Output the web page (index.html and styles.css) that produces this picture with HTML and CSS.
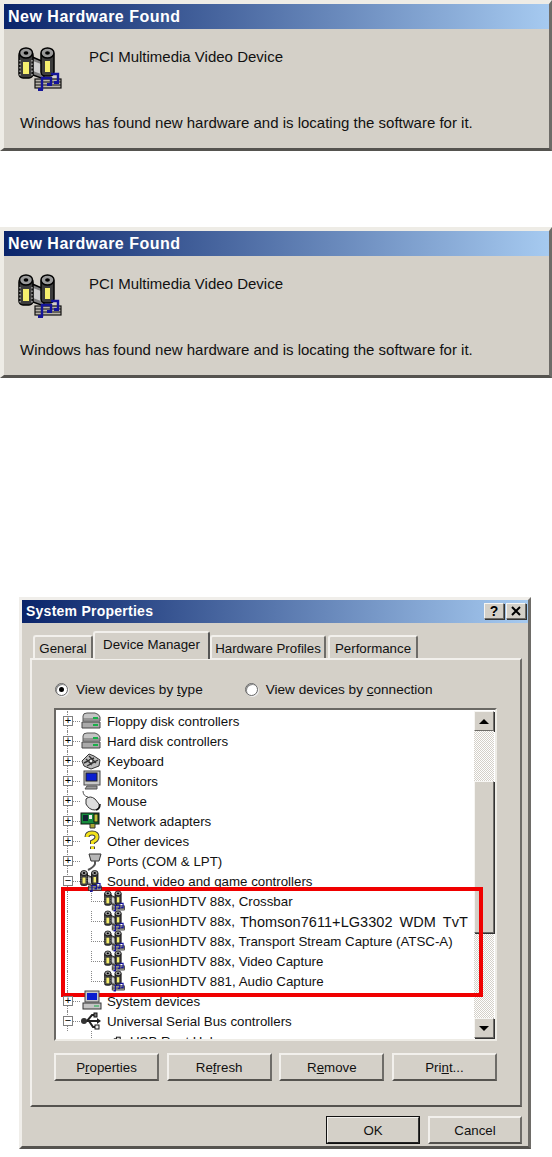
FILE: index.html
```html
<!DOCTYPE html>
<html lang="en">
<head>
  <meta charset="UTF-8" />
  <title>Hardware setup</title>
  <link rel="stylesheet" href="styles.css">
</head>
<body>

  <svg class="sprites" width="0" height="0">
    <symbol id="i-film" viewBox="0 0 44 44">
      <path d="M12 9 L26 15 V32 L12 27Z" fill="#7d7d7d" stroke="#000" stroke-width="1.5"/>
      <path d="M15 14 L23 17 V27 L15 24Z" fill="#cfcfcf"/>
      <rect x="1" y="4" width="14" height="27" rx="4" fill="#3c3c3c" stroke="#000" stroke-width="1.5"/>
      <ellipse cx="8" cy="6" rx="6.5" ry="5" fill="#9a9a9a" stroke="#000" stroke-width="1.5"/>
      <ellipse cx="8" cy="6" rx="2.4" ry="1.8" fill="#000"/>
      <rect x="5" y="15" width="6" height="12" fill="#f6ef6e"/>
      <path d="M2 13V29M14 13V29" stroke="#ddd" stroke-dasharray="1.5 2"/>
      <rect x="23" y="4" width="13" height="25" rx="4" fill="#3c3c3c" stroke="#000" stroke-width="1.5"/>
      <ellipse cx="29.5" cy="6" rx="6.5" ry="5" fill="#9a9a9a" stroke="#000" stroke-width="1.5"/>
      <ellipse cx="29.5" cy="6" rx="2.4" ry="1.8" fill="#000"/>
      <rect x="27" y="14" width="5" height="11" fill="#f6ef6e"/>
      <rect x="17" y="32" width="26" height="9" fill="#b8b4aa" stroke="#111" stroke-width="1.2"/>
      <path d="M17 35H43M17 38H43" stroke="#111"/>
      <path d="M24 43V31H33V37M33 27H40V35" fill="none" stroke="#15159a" stroke-width="2.4"/>
      <path d="M20 44h5v-3h-5zM29 39h5v-3h-5zM36 37h5v-3h-5z" fill="#15159a"/>
    </symbol>
    <symbol id="i-disk" viewBox="0 0 22 20">
      <path d="M3 5 Q3 2 7 2 H15 Q19 3 20 6 V10 H3Z" fill="#c4c4c4" stroke="#555"/>
      <path d="M2 11 H20 V17 H2Z" fill="#aaa" stroke="#444"/>
      <path d="M3 8H20" stroke="#666"/>
      <rect x="13" y="6" width="5" height="2" fill="#19b04a"/>
      <rect x="13" y="13" width="5" height="2" fill="#19b04a"/>
    </symbol>
    <symbol id="i-keys" viewBox="0 0 22 20">
      <path d="M2 10 L9 3 L14 5 L20 9 L19 15 L11 18 L4 15Z" fill="#bbb" stroke="#333"/>
      <path d="M6 8 L12 14M9 5 L16 12M4 12 L14 7M7 15 L18 9" stroke="#333" stroke-width="1.4"/>
      <circle cx="11" cy="10" r="2" fill="#eee" stroke="#222"/>
    </symbol>
    <symbol id="i-monitor" viewBox="0 0 22 20">
      <rect x="4" y="0" width="16" height="14" fill="#c8c8c8" stroke="#444"/>
      <rect x="6" y="2" width="11" height="8" fill="#0a1ed0" stroke="#222"/>
      <path d="M7 15H17V18H5Z" fill="#999" stroke="#555"/>
    </symbol>
    <symbol id="i-mouse" viewBox="0 0 22 20">
      <path d="M3 0 Q3 5 8 6" fill="none" stroke="#555"/>
      <path d="M6 8 Q10 4 15 8 L19 13 Q20 18 15 19 Q9 19 6 13Z" fill="#ddd" stroke="#333"/>
      <path d="M16 19 Q20 18 20 13" fill="none" stroke="#111" stroke-width="1.5"/>
    </symbol>
    <symbol id="i-net" viewBox="0 0 22 20">
      <rect x="1" y="2" width="18" height="11" fill="#158a3c" stroke="#111"/>
      <rect x="3" y="4" width="5" height="6" fill="#123"/>
      <rect x="9" y="4" width="3" height="4" fill="#eee"/>
      <rect x="14" y="3" width="4" height="8" fill="#bfc23a" stroke="#111"/>
      <path d="M10 13V17H15V13" fill="#a9a632" stroke="#333"/>
    </symbol>
    <symbol id="i-help" viewBox="0 0 22 20">
      <path d="M7 6 Q7 2 12 2 Q17 2 17 6 Q17 9 12.5 11 V13M12.5 15.5V18" fill="none" stroke="#444" stroke-width="5"/>
      <path d="M7 6 Q7 2 12 2 Q17 2 17 6 Q17 9 12.5 11 V13M12.5 15.5V18" fill="none" stroke="#f2e21c" stroke-width="3"/>
    </symbol>
    <symbol id="i-port" viewBox="0 0 22 20">
      <path d="M9 3H21L19 10H11Z" fill="#b8b8b8" stroke="#333"/>
      <path d="M15 10V13 Q14 16 8 19" fill="none" stroke="#555" stroke-width="2"/>
    </symbol>
    <symbol id="i-system" viewBox="0 0 22 20">
      <rect x="5" y="0" width="14" height="11" fill="#c8c8c8" stroke="#444"/>
      <rect x="7" y="2" width="10" height="7" fill="#0a1ed0"/>
      <rect x="3" y="12" width="18" height="6" fill="#c4c4c4" stroke="#333"/>
      <path d="M14 15H19" stroke="#19b04a"/>
    </symbol>
    <symbol id="i-usb" viewBox="0 0 22 20">
      <path d="M2 10H20M7 10L12 4H15M9 10L13 16H16" fill="none" stroke="#222" stroke-width="2"/>
      <circle cx="4" cy="10" r="3" fill="#333"/>
      <path d="M17 7L21 10L17 13Z" fill="#222"/>
      <rect x="14" y="2" width="3" height="4" fill="#777" stroke="#111"/>
      <rect x="15" y="14" width="4" height="4" fill="#eee" stroke="#111"/>
    </symbol>
    <symbol id="i-hub" viewBox="0 0 22 20">
      <path d="M1 14H20V17H1ZM5 14L11 8H15" fill="none" stroke="#333" stroke-width="1.6"/>
      <rect x="13" y="6" width="4" height="4" fill="#ddd" stroke="#111"/>
    </symbol>
  </svg>

  <div class="notice">
    <div class="caption">New Hardware Found</div>
    <div class="notice-head">
      <svg class="notice-icon"><use href="#i-film"/></svg>
      <div class="notice-device">PCI Multimedia Video Device</div>
    </div>
    <p class="notice-text">Windows has found new hardware and is locating the software for it.</p>
  </div>

  <div class="notice notice-second">
    <div class="caption">New Hardware Found</div>
    <div class="notice-head">
      <svg class="notice-icon"><use href="#i-film"/></svg>
      <div class="notice-device">PCI Multimedia Video Device</div>
    </div>
    <p class="notice-text">Windows has found new hardware and is locating the software for it.</p>
  </div>

  <div class="props">
    <div class="props-caption">
      <span>System Properties</span>
      <div class="caption-btns">
        <button class="caption-btn">?</button>
        <button class="caption-btn"><svg class="close-x" viewBox="0 0 10 10"><path d="M1 1L9 9M9 1L1 9" stroke="#000" stroke-width="2"/></svg></button>
      </div>
    </div>

    <div class="tabs">
      <div class="tab tab-general">General</div>
      <div class="tab tab-active">Device Manager</div>
      <div class="tab tab-hardware">Hardware Profiles</div>
      <div class="tab tab-perf">Performance</div>
    </div>

    <div class="panel">
      <div class="view-options">
        <label class="radio-label"><span class="radio radio-on"></span>View devices by <u>t</u>ype</label>
        <label class="radio-label"><span class="radio"></span>View devices by <u>c</u>onnection</label>
      </div>

      <div class="listbox">
        <div class="tree">
          <div class="row"><span class="twist">+</span><span class="stub"></span><svg class="tree-icon"><use href="#i-disk"/></svg>Floppy disk controllers</div>
          <div class="row"><span class="twist">+</span><span class="stub"></span><svg class="tree-icon"><use href="#i-disk"/></svg>Hard disk controllers</div>
          <div class="row"><span class="twist">+</span><span class="stub"></span><svg class="tree-icon"><use href="#i-keys"/></svg>Keyboard</div>
          <div class="row"><span class="twist">+</span><span class="stub"></span><svg class="tree-icon"><use href="#i-monitor"/></svg>Monitors</div>
          <div class="row"><span class="twist">+</span><span class="stub"></span><svg class="tree-icon"><use href="#i-mouse"/></svg>Mouse</div>
          <div class="row"><span class="twist">+</span><span class="stub"></span><svg class="tree-icon"><use href="#i-net"/></svg>Network adapters</div>
          <div class="row"><span class="twist">+</span><span class="stub"></span><svg class="tree-icon"><use href="#i-help"/></svg>Other devices</div>
          <div class="row"><span class="twist">+</span><span class="stub"></span><svg class="tree-icon"><use href="#i-port"/></svg>Ports (COM &amp; LPT)</div>
          <div class="row"><span class="twist">−</span><span class="stub"></span><svg class="tree-icon"><use href="#i-film"/></svg>Sound, video and game controllers</div>
          <div class="row row-child"><svg class="tree-icon"><use href="#i-film"/></svg>FusionHDTV 88x, Crossbar</div>
          <div class="row row-child"><svg class="tree-icon"><use href="#i-film"/></svg>FusionHDTV 88x,<span class="overtyped">Thomson7611+LG3302 WDM TvT</span></div>
          <div class="row row-child"><svg class="tree-icon"><use href="#i-film"/></svg>FusionHDTV 88x, Transport Stream Capture (ATSC-A)</div>
          <div class="row row-child"><svg class="tree-icon"><use href="#i-film"/></svg>FusionHDTV 88x, Video Capture</div>
          <div class="row row-child"><svg class="tree-icon"><use href="#i-film"/></svg>FusionHDTV 881, Audio Capture</div>
          <div class="row"><span class="twist">+</span><span class="stub"></span><svg class="tree-icon"><use href="#i-system"/></svg>System devices</div>
          <div class="row"><span class="twist">−</span><span class="stub"></span><svg class="tree-icon"><use href="#i-usb"/></svg>Universal Serial Bus controllers</div>
          <div class="row row-child row-hub"><svg class="tree-icon"><use href="#i-hub"/></svg>USB Root Hub</div>
        </div>
        <div class="scrollbar">
          <div class="scroll-btn"><span class="arrow-up"></span></div>
          <div class="scroll-track">
            <div class="scroll-thumb"></div>
          </div>
          <div class="scroll-btn"><span class="arrow-down"></span></div>
        </div>
        <div class="highlight"></div>
      </div>

      <div class="panel-btns">
        <button class="btn">P<u>r</u>operties</button>
        <button class="btn">Re<u>f</u>resh</button>
        <button class="btn">R<u>e</u>move</button>
        <button class="btn">Pri<u>n</u>t...</button>
      </div>
    </div>

    <div class="props-footer">
      <button class="btn btn-default">OK</button>
      <button class="btn">Cancel</button>
    </div>
  </div>

</body>
</html>
```

FILE: styles.css
```css
* { margin: 0; padding: 0; box-sizing: border-box; }

body {
  font-family: 'Liberation Sans', Arial, sans-serif;
  font-size: 15px;
  background: #fff;
  color: #111;
  height: 1157px;
  overflow: hidden;
}

.sprites { position: absolute; }

/* new hardware popups */
.notice {
  width: 552px;
  height: 151px;
  background: #d4d0c8;
  border: 4px solid #d4d0c8;
  border-top-color: #eeece6;
  border-left-color: #eeece6;
  border-right-color: #6e6c68;
  border-bottom-color: #55534f;
  border-width: 4px 3px 3px 4px;
}

.notice-second { margin-top: 76px; }

.caption {
  height: 25px;
  line-height: 25px;
  padding-left: 4px;
  background: linear-gradient(to right, #0a246a, #a6caf0);
  color: #fff;
  font-size: 16px;
  font-weight: bold;
  letter-spacing: 0.5px;
}

.notice-head {
  display: flex;
  margin-top: 18px;
  height: 44px;
}

.notice-icon {
  width: 44px;
  height: 44px;
  margin-left: 14px;
}

.notice-device {
  margin-left: 27px;
  margin-top: 1px;
}

.notice-text {
  margin-top: 23px;
  margin-left: 16px;
}

/* system properties */
.props {
  width: 512px;
  height: 552px;
  margin: 219px 0 0 19px;
  padding: 0 8px;
  font-size: 13.3px;
  background: #d4d0c8;
  border: 3px solid #d4d0c8;
  border-top-color: #f0eeea;
  border-left-color: #f0eeea;
  border-right-color: #6e6c68;
  border-bottom-color: #55534f;
}

.props-caption {
  display: flex;
  justify-content: space-between;
  align-items: center;
  height: 23px;
  margin: 0 -8px;
  padding: 0 2px 1px 4px;
  background: linear-gradient(to right, #0a246a, #a6caf0);
  color: #fff;
  font-size: 14px;
  font-weight: bold;
  letter-spacing: 0.25px;
}

.caption-btns {
  display: flex;
  gap: 2px;
}

.caption-btn {
  display: flex;
  align-items: center;
  justify-content: center;
  width: 20px;
  height: 16px;
  background: #d4d0c8;
  border: 1px solid #6e6c68;
  border-top-color: #f6f5f2;
  border-left-color: #f6f5f2;
  box-shadow: 1px 1px 0 #333;
  font-family: 'Liberation Sans', sans-serif;
  font-size: 14px;
  font-weight: bold;
  color: #000;
}

.close-x {
  width: 10px;
  height: 10px;
}

.tabs {
  display: flex;
  align-items: flex-end;
  height: 35px;
  padding-left: 3px;
}

.tab {
  height: 23px;
  line-height: 23px;
  text-align: center;
  background: #d4d0c8;
  border: 2px solid #f2f0ec;
  border-bottom: none;
  border-right-color: #6e6c68;
  border-radius: 3px 3px 0 0;
}

.tab-general { width: 60px; }
.tab-hardware { width: 116px; }
.tab-perf { width: 90px; margin-left: 2px; }

.tab-active {
  position: relative;
  z-index: 1;
  width: 117px;
  height: 28px;
  line-height: 23px;
  margin-bottom: -1px;
  border-right-color: #555;
}

.panel {
  width: 492px;
  height: 449px;
  padding: 0 22px;
  border: 2px solid #f2f0ec;
  border-right-color: #6e6c68;
  border-bottom-color: #55534f;
}

.view-options {
  display: flex;
  gap: 42px;
  height: 48px;
  padding: 21px 0 0 1px;
  font-size: 13.6px;
}

.radio-label {
  display: flex;
  align-items: center;
  height: 16px;
  white-space: pre;
}

.radio {
  width: 13px;
  height: 13px;
  margin-right: 8px;
  border-radius: 50%;
  background: #fff;
  border: 1px solid #666;
  box-shadow: inset 1px 1px 0 #888, 1px 1px 0 #eee;
  display: flex;
  align-items: center;
  justify-content: center;
}

.radio-on::after {
  content: "";
  width: 5px;
  height: 5px;
  border-radius: 50%;
  background: #000;
}

.listbox {
  position: relative;
  display: flex;
  width: 443px;
  height: 333px;
  background: #fff;
  border: 2px solid #6a6864;
  border-right-color: #eeece6;
  border-bottom-color: #eeece6;
}

.tree {
  flex: 1;
  min-width: 0;
  height: 100%;
  padding-top: 1px;
  overflow: hidden;
}

.row {
  position: relative;
  display: flex;
  align-items: center;
  height: 20px;
  padding-left: 7px;
  white-space: pre;
}

/* dotted trunk through every row */
.row::before {
  content: "";
  position: absolute;
  left: 11px;
  top: 0;
  height: 20px;
  border-left: 1px dotted #888;
}

.twist {
  position: relative;
  z-index: 1;
  width: 10px;
  height: 10px;
  line-height: 7px;
  font-size: 11px;
  text-align: center;
  color: #000;
  background: #fff;
  border: 1px solid #808080;
}

.stub {
  width: 7px;
  border-top: 1px dotted #888;
}

.tree-icon {
  position: relative;
  z-index: 1;
  width: 22px;
  height: 22px;
  margin-right: 5px;
  flex: none;
}

.row-child { padding-left: 48px; }

.row-child .tree-icon {
  width: 21px;
  height: 22px;
}

.row-child::after {
  content: "";
  position: absolute;
  left: 35px;
  top: 0;
  width: 12px;
  height: 10px;
  border-left: 1px dotted #888;
  border-bottom: 1px dotted #888;
}

.row-hub::before { display: none; }

.overtyped {
  font-size: 14.5px;
  letter-spacing: 0.05px;
  word-spacing: 3px;
  margin-left: 5px;
  position: relative;
  top: 1px;
}

.scrollbar {
  display: flex;
  flex-direction: column;
  flex: none;
  width: 20px;
  margin-right: 1px;
  padding: 1px 0;
}

.scroll-btn {
  flex: none;
  display: flex;
  align-items: center;
  justify-content: center;
  height: 20px;
  background: #d4d0c8;
  border: 1px solid #6e6c68;
  border-top-color: #f6f5f2;
  border-left-color: #f6f5f2;
  box-shadow: 1px 1px 0 #333;
}

.arrow-up, .arrow-down {
  width: 0;
  height: 0;
  border-left: 5px solid transparent;
  border-right: 5px solid transparent;
}

.arrow-up { border-bottom: 5px solid #000; }
.arrow-down { border-top: 5px solid #000; }

.scroll-track {
  flex: 1;
  padding-top: 50px;
  background: repeating-conic-gradient(#d4d0c8 0 25%, #fff 0 50%) 0 0 / 2px 2px;
}

.scroll-thumb {
  height: 152px;
  background: #d4d0c8;
  border: 1px solid #6e6c68;
  border-top-color: #f6f5f2;
  border-left-color: #f6f5f2;
  box-shadow: 1px 1px 0 #333;
}

/* red marker drawn over the tree */
.highlight {
  position: absolute;
  left: 5px;
  top: 177px;
  width: 422px;
  height: 110px;
  border: 4px solid #f00000;
  pointer-events: none;
}

.panel-btns {
  display: flex;
  justify-content: space-between;
  margin-top: 12px;
  width: 443px;
}

.btn {
  width: 105px;
  height: 28px;
  background: #d4d0c8;
  border: 2px solid #f2f0ec;
  border-right-color: #6e6c68;
  border-bottom-color: #55534f;
  font-family: 'Liberation Sans', sans-serif;
  font-size: 13.3px;
  color: #111;
}

.props-footer {
  display: flex;
  justify-content: flex-end;
  gap: 8px;
  margin-top: 9px;
  width: 492px;
}

.props-footer .btn { width: 94px; }

.btn-default {
  outline: 1px solid #111;
  outline-offset: -1px;
  border-right-color: #333;
  border-bottom-color: #222;
}
```
